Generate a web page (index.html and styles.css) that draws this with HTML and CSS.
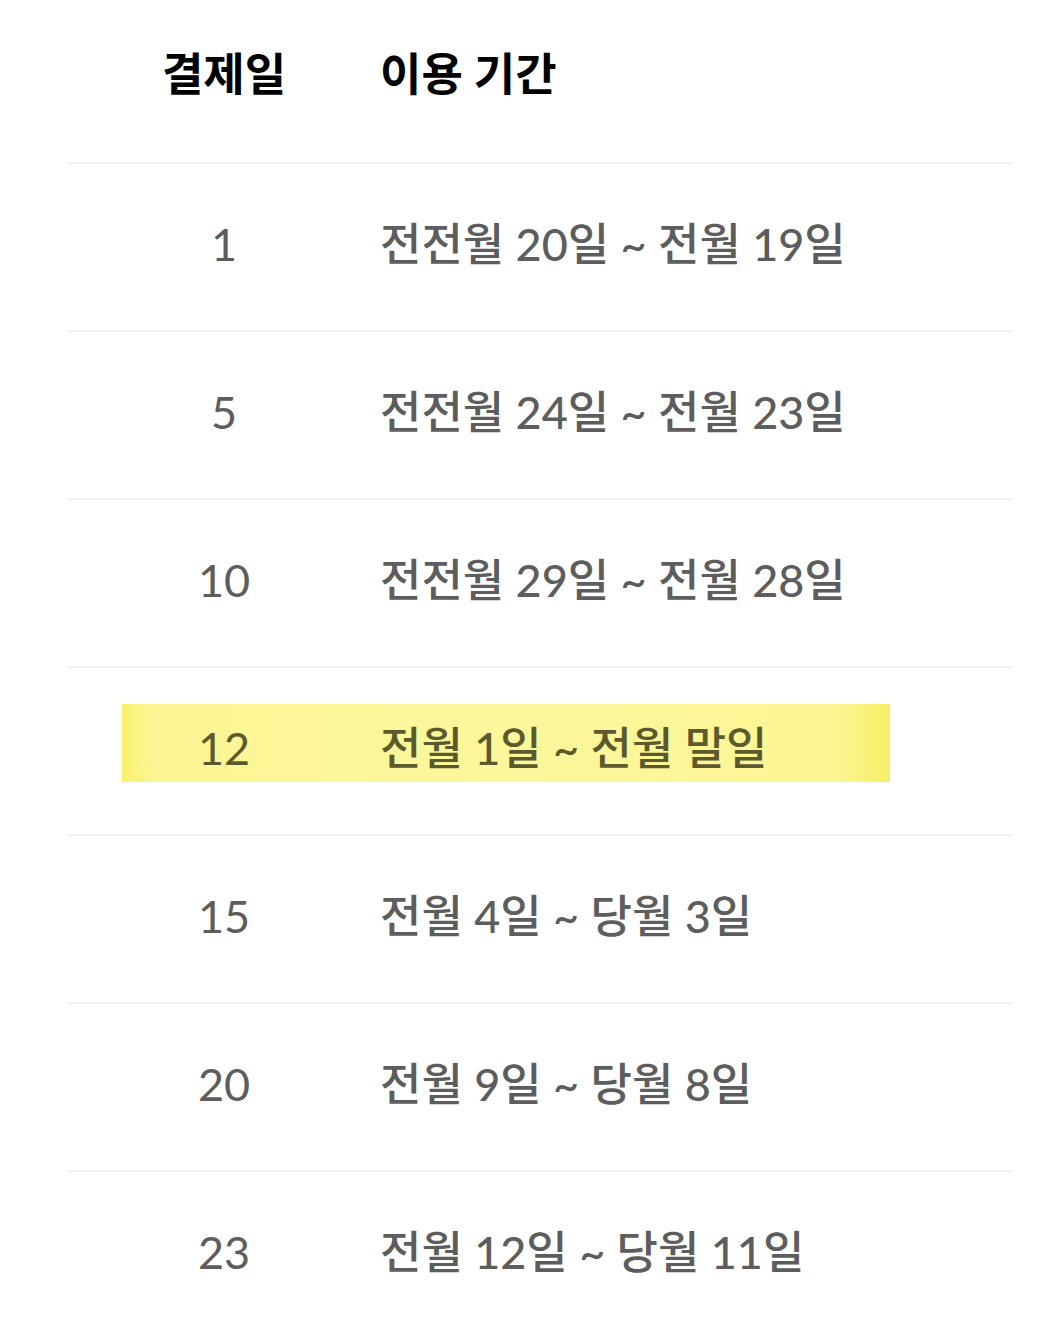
FILE: index.html
```html
<!DOCTYPE html>
<html lang="ko">
<head>
<meta charset="utf-8">
<link rel="stylesheet" href="styles.css">
</head>
<body>
<div class="table">
  <div class="row head">
    <div class="c1">결제일</div>
    <div class="c2">이용 기간</div>
  </div>
  <div class="row">
    <div class="c1">1</div>
    <div class="c2">전전월 20일 ~ 전월 19일</div>
  </div>
  <div class="row">
    <div class="c1">5</div>
    <div class="c2">전전월 24일 ~ 전월 23일</div>
  </div>
  <div class="row">
    <div class="c1">10</div>
    <div class="c2">전전월 29일 ~ 전월 28일</div>
  </div>
  <div class="row hl">
    <div class="c1">12</div>
    <div class="c2">전월 1일 ~ 전월 말일</div>
  </div>
  <div class="row">
    <div class="c1">15</div>
    <div class="c2">전월 4일 ~ 당월 3일</div>
  </div>
  <div class="row">
    <div class="c1">20</div>
    <div class="c2">전월 9일 ~ 당월 8일</div>
  </div>
  <div class="row">
    <div class="c1">23</div>
    <div class="c2">전월 12일 ~ 당월 11일</div>
  </div>
</div>
</body>
</html>
```
FILE: styles.css
```css
html, body {
  margin: 0;
  padding: 0;
  background: #fff;
}
body {
  font-family: "Lato", "Noto Sans CJK KR", sans-serif;
}
.table {
  margin-left: 68px;
  width: 944px;
}
.row {
  display: grid;
  grid-template-columns: 312px 1fr;
  align-items: center;
  height: 166px;
  border-top: 2px solid #f3f3f3;
  font-size: 45px;
  color: #5d5d5d;
  position: relative;
}
.row.head {
  height: 162px;
  border-top: none;
  color: #000;
  font-weight: 700;
  align-items: start;
}
.row.head > div {
  padding-top: 47px;
  line-height: 54px;
}
.row > div {
  line-height: 50px;
  padding-bottom: 6px;
}
.row.head > div {
  padding-bottom: 0;
}
.c1 {
  text-align: center;
}
.row:not(.head) .c2 {
  font-weight: 500;
}
.row.hl {
  color: #5b5a2d;
}
.row.hl::before {
  content: "";
  position: absolute;
  left: 54px;
  width: 768px;
  top: 36px;
  height: 78px;
  background: linear-gradient(90deg, #f8f06a 0%, #fbf595 4%, #fcf79b 50%, #fbf595 93%, #f7ee66 100%);
  z-index: 0;
}
.row.hl > div {
  position: relative;
  z-index: 1;
}
```
